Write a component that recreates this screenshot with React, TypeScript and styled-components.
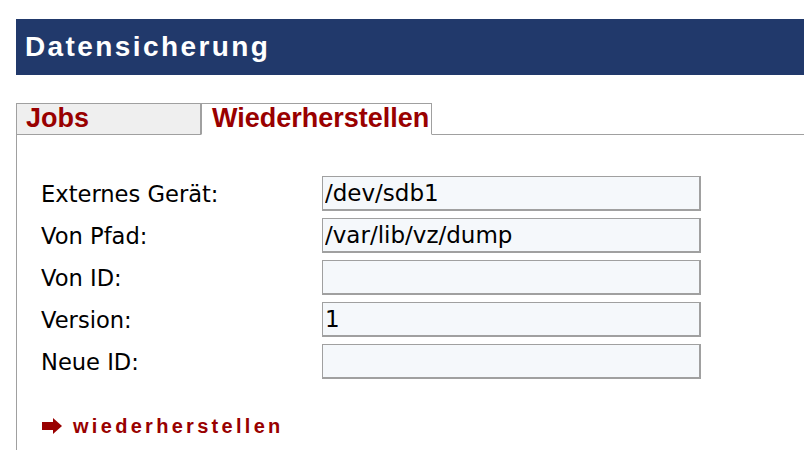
import React, { FC } from 'react';
import styled, { createGlobalStyle } from 'styled-components';

const GlobalStyle = createGlobalStyle`
  html, body {
    margin: 0;
    padding: 0;
    overflow: hidden;
    background: #fff;
  }
`;

const Page = styled.div`
  width: 788px;
  padding: 19px 0 0 16px;
`;

const Header = styled.h1`
  margin: 0;
  height: 56px;
  padding-left: 9px;
  display: flex;
  align-items: center;
  background: #21396b;
  color: #fff;
  font-family: 'Liberation Sans', Arial, sans-serif;
  font-weight: bold;
  font-size: 28px;
  letter-spacing: 2.4px;
`;

const TabBar = styled.div`
  display: flex;
  margin-top: 28px;
  border-bottom: 1px solid #a0a0a0;
`;

const Tab = styled.div<{ $active?: boolean }>`
  box-sizing: border-box;
  height: ${(props) => (props.$active ? '32px' : '31px')};
  margin-bottom: ${(props) => (props.$active ? '-1px' : '0')};
  width: ${(props) => (props.$active ? 'auto' : '185px')};
  padding: ${(props) => (props.$active ? '0 2px 0 10px' : '0 0 0 9px')};
  border: 1px solid #a0a0a0;
  border-bottom: ${(props) => (props.$active ? '1px solid #fff' : 'none')};
  background: ${(props) => (props.$active ? '#fff' : '#efefef')};
  color: #990000;
  font-family: 'Liberation Sans', Arial, sans-serif;
  font-weight: bold;
  font-size: 27px;
  line-height: 29px;
  cursor: pointer;
`;

const Panel = styled.div`
  border-left: 1px solid #a0a0a0;
  padding: 41px 0 13px 24px;
`;

const Form = styled.div`
  display: grid;
  grid-template-columns: 281px 379px;
  grid-auto-rows: 35px;
  row-gap: 7px;
  align-items: center;
`;

const Label = styled.label`
  font-family: 'DejaVu Sans', Verdana, sans-serif;
  font-size: 22.6px;
  color: #000;
`;

const Input = styled.input`
  box-sizing: border-box;
  width: 379px;
  height: 35px;
  margin: 0;
  padding: 0 2px;
  border-style: solid;
  border-color: #a0a0a0;
  border-width: 1px 2px 2px 1px;
  background: #f5f8fb;
  color: #000;
  font-family: 'DejaVu Sans', Verdana, sans-serif;
  font-size: 23px;
  outline: none;
`;

const Action = styled.a`
  display: flex;
  align-items: center;
  gap: 11px;
  margin-top: 36px;
  padding-left: 1px;
  height: 22px;
  color: #990000;
  font-family: 'Liberation Sans', Arial, sans-serif;
  font-weight: bold;
  font-size: 20px;
  letter-spacing: 3.3px;
  text-decoration: none;
  cursor: pointer;
`;

const Arrow: FC = () => (
  <svg width="20" height="16" viewBox="0 0 20 16">
    <polygon points="0,4 11,4 11,0 20,8 11,16 11,12 0,12" fill="#990000" />
  </svg>
);

const fields = [
  { label: 'Externes Gerät:', value: '/dev/sdb1' },
  { label: 'Von Pfad:', value: '/var/lib/vz/dump' },
  { label: 'Von ID:', value: '' },
  { label: 'Version:', value: '1' },
  { label: 'Neue ID:', value: '' },
];

const App: FC = () => (
  <>
    <GlobalStyle />
    <Page>
      <Header>Datensicherung</Header>
      <TabBar>
        <Tab>Jobs</Tab>
        <Tab $active>Wiederherstellen</Tab>
      </TabBar>
      <Panel>
        <Form>
          {fields.map((f) => (
            <React.Fragment key={f.label}>
              <Label>{f.label}</Label>
              <Input defaultValue={f.value} />
            </React.Fragment>
          ))}
        </Form>
        <Action>
          <Arrow />
          wiederherstellen
        </Action>
      </Panel>
    </Page>
  </>
);

export default App;
